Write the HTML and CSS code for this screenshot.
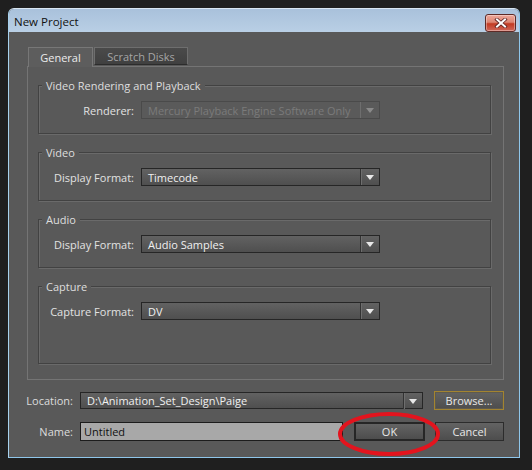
FILE: index.html
```html
<!DOCTYPE html>
<html>
<head>
<meta charset="utf-8">
<link rel="stylesheet" href="styles.css">
</head>
<body>
<div class="window">
  <div class="titlebar">
    <span class="title">New Project</span>
    <button class="close" aria-label="Close">
      <svg width="14" height="10" viewBox="0 0 14 10"><path d="M3 1.5 L11 8.5 M11 1.5 L3 8.5" stroke="#5a2020" stroke-width="3.6" stroke-linecap="square"/><path d="M3 1.5 L11 8.5 M11 1.5 L3 8.5" stroke="#fff" stroke-width="2" stroke-linecap="square"/></svg>
    </button>
  </div>
  <div class="body">
    <div class="tabs">
      <div class="tab active">General</div>
      <div class="tab">Scratch Disks</div>
    </div>
    <div class="panel">
      <div class="group">
        <div class="gtitle">Video Rendering and Playback</div>
        <div class="row">
          <label>Renderer:</label>
          <div class="select disabled"><span>Mercury Playback Engine Software Only</span><i class="arrow"></i></div>
        </div>
      </div>
      <div class="group">
        <div class="gtitle">Video</div>
        <div class="row">
          <label>Display Format:</label>
          <div class="select"><span>Timecode</span><i class="arrow"></i></div>
        </div>
      </div>
      <div class="group">
        <div class="gtitle">Audio</div>
        <div class="row">
          <label>Display Format:</label>
          <div class="select"><span>Audio Samples</span><i class="arrow"></i></div>
        </div>
      </div>
      <div class="group last">
        <div class="gtitle">Capture</div>
        <div class="row">
          <label>Capture Format:</label>
          <div class="select"><span>DV</span><i class="arrow"></i></div>
        </div>
      </div>
    </div>
    <div class="frow loc">
      <label>Location:</label>
      <div class="select wide"><span>D:\Animation_Set_Design\Paige</span><i class="arrow"></i></div>
      <button class="btn browse">Browse...</button>
    </div>
    <div class="frow name">
      <label>Name:</label>
      <div class="input">Untitled</div>
      <div class="okwrap">
        <button class="btn ok">OK</button>
        <svg class="circle" width="110" height="50" viewBox="0 0 110 50"><ellipse cx="55" cy="25" rx="49" ry="20" fill="none" stroke="#e3141e" stroke-width="4"/></svg>
      </div>
      <button class="btn cancel">Cancel</button>
    </div>
  </div>
</div>
</body>
</html>
```

FILE: styles.css
```css
* { box-sizing: border-box; }
html, body { margin: 0; padding: 0; }
body {
  background: #1f1f1f;
  width: 532px;
  height: 470px;
  overflow: hidden;
  font-family: "Open Sans", "Noto Sans", sans-serif;
  font-size: 11px;
  color: #e2e2e2;
}
.window {
  margin: 8px 0 0 8px;
  width: 512px;
  height: 450px;
  border: 1px solid #8fc6ea;
  border-top-color: #d8e6f2;
  border-left-color: #a7d2ee;
  border-radius: 6px 6px 0 0;
  background: #595959;
  display: flex;
  flex-direction: column;
}
.titlebar {
  height: 23px;
  flex: none;
  background: linear-gradient(#a9c1db, #b9cfe5);
  border-radius: 5px 5px 0 0;
  display: flex;
  align-items: center;
  justify-content: space-between;
  padding: 0 3px 0 5px;
}
.title {
  font-family: "Open Sans", sans-serif;
  font-size: 11.5px;
  color: #111;
  margin-top: 1px;
}
.close {
  width: 31px;
  height: 18px;
  margin-top: 4px;
  border: 1px solid #5e2a26;
  border-radius: 3px;
  background: linear-gradient(#eea79a 0%, #dd8774 45%, #c23a22 55%, #d0685a 100%);
  box-shadow: inset 0 0 0 1px rgba(255,255,255,0.35);
  display: flex;
  align-items: center;
  justify-content: center;
  padding: 0;
}
.body {
  flex: 1;
  padding: 15px 0 0 9px;
  display: flex;
  flex-direction: column;
}
.tabs {
  display: flex;
  margin-left: 10px;
  height: 19px;
  position: relative;
  z-index: 1;
}
.tab {
  height: 18px;
  display: flex;
  align-items: center;
  justify-content: center;
  font-size: 11px;
}
.tab.active {
  width: 65px;
  height: 20px;
  background: #5d5d5d;
  border: 1px solid #777;
  border-bottom: none;
  color: #ececec;
}
.tab:not(.active) {
  width: 94px;
  margin-left: 1px;
  background: linear-gradient(#4a4a4a, #404040);
  border: 1px solid #6e6e6e;
  border-bottom-color: #2c2c2c;
  color: #a6a6a6;
}
.panel {
  width: 477px;
  height: 314px;
  border: 1px solid #747474;
  margin-left: 9px;
  padding: 18px 12px 15px 10px;
  display: flex;
  flex-direction: column;
  gap: 18px;
}
.group {
  border: 1px solid #424242;
  box-shadow: 1px 1px 0 #6a6a6a, inset 1px 1px 0 #6a6a6a;
  padding: 0 0 14px 0;
}
.gtitle {
  display: block;
  width: fit-content;
  margin: -8px 0 0 3px;
  padding: 0 4px;
  height: 16px;
  line-height: 16px;
  background: #595959;
  color: #dedede;
  font-size: 11px;
}
.group.last { flex: 1; }
.row {
  display: flex;
  align-items: center;
  margin-top: 7px;
}
.row label {
  width: 95px;
  text-align: right;
  margin-right: 7px;
}
.select {
  width: 239px;
  height: 18px;
  border: 1px solid #262626;
  background: linear-gradient(#626262, #4f4f4f);
  display: flex;
  align-items: center;
  color: #f0f0f0;
}
.select span {
  flex: 1;
  padding-left: 6px;
  white-space: nowrap;
  overflow: hidden;
}
.select .arrow {
  width: 19px;
  height: 16px;
  border-left: 1px solid #333;
  box-shadow: inset 1px 0 0 #6e6e6e;
  position: relative;
  flex: none;
}
.select .arrow::after {
  content: "";
  position: absolute;
  left: 5px;
  top: 6px;
  border-left: 4px solid transparent;
  border-right: 4px solid transparent;
  border-top: 5px solid #e8e8e8;
}
.select.disabled {
  background: #5a5a5a;
  border-color: #4a4a4a;
  color: #7b7b7b;
}
.select.disabled .arrow { border-left-color: #6e6e6e; box-shadow: none; }
.select.disabled .arrow::after { border-top-color: #8a8a8a; }
.frow {
  display: flex;
  align-items: center;
}
.frow label {
  width: 55px;
  text-align: right;
  margin-right: 7px;
  color: #dcdcdc;
}
.loc { margin-top: 11px; }
.select.wide { width: 343px; height: 17px; }
.btn {
  font-family: "Open Sans", sans-serif;
  font-size: 11px;
  color: #e8e8e8;
  height: 19px;
  padding: 0;
  background: linear-gradient(#636363, #4d4d4d);
  border: 1px solid #2c2c2c;
}
.browse {
  width: 70px;
  margin-left: 11px;
  border-color: #a38430;
  box-shadow: inset 0 0 0 1px #5e5a4e;
}
.name { margin-top: 12px; }
.input {
  width: 263px;
  height: 19px;
  background: #a8a8a8;
  border: 1px solid #1c1c1c;
  color: #101010;
  padding-left: 3px;
  line-height: 17px;
}
.okwrap {
  position: relative;
  margin-left: 11px;
}
.ok {
  width: 71px;
  display: block;
  border: 2px solid #262626;
  height: 19px;
}
.circle {
  position: absolute;
  left: -20px;
  top: -13px;
}
.cancel {
  width: 69px;
  margin-left: 10px;
}
```
